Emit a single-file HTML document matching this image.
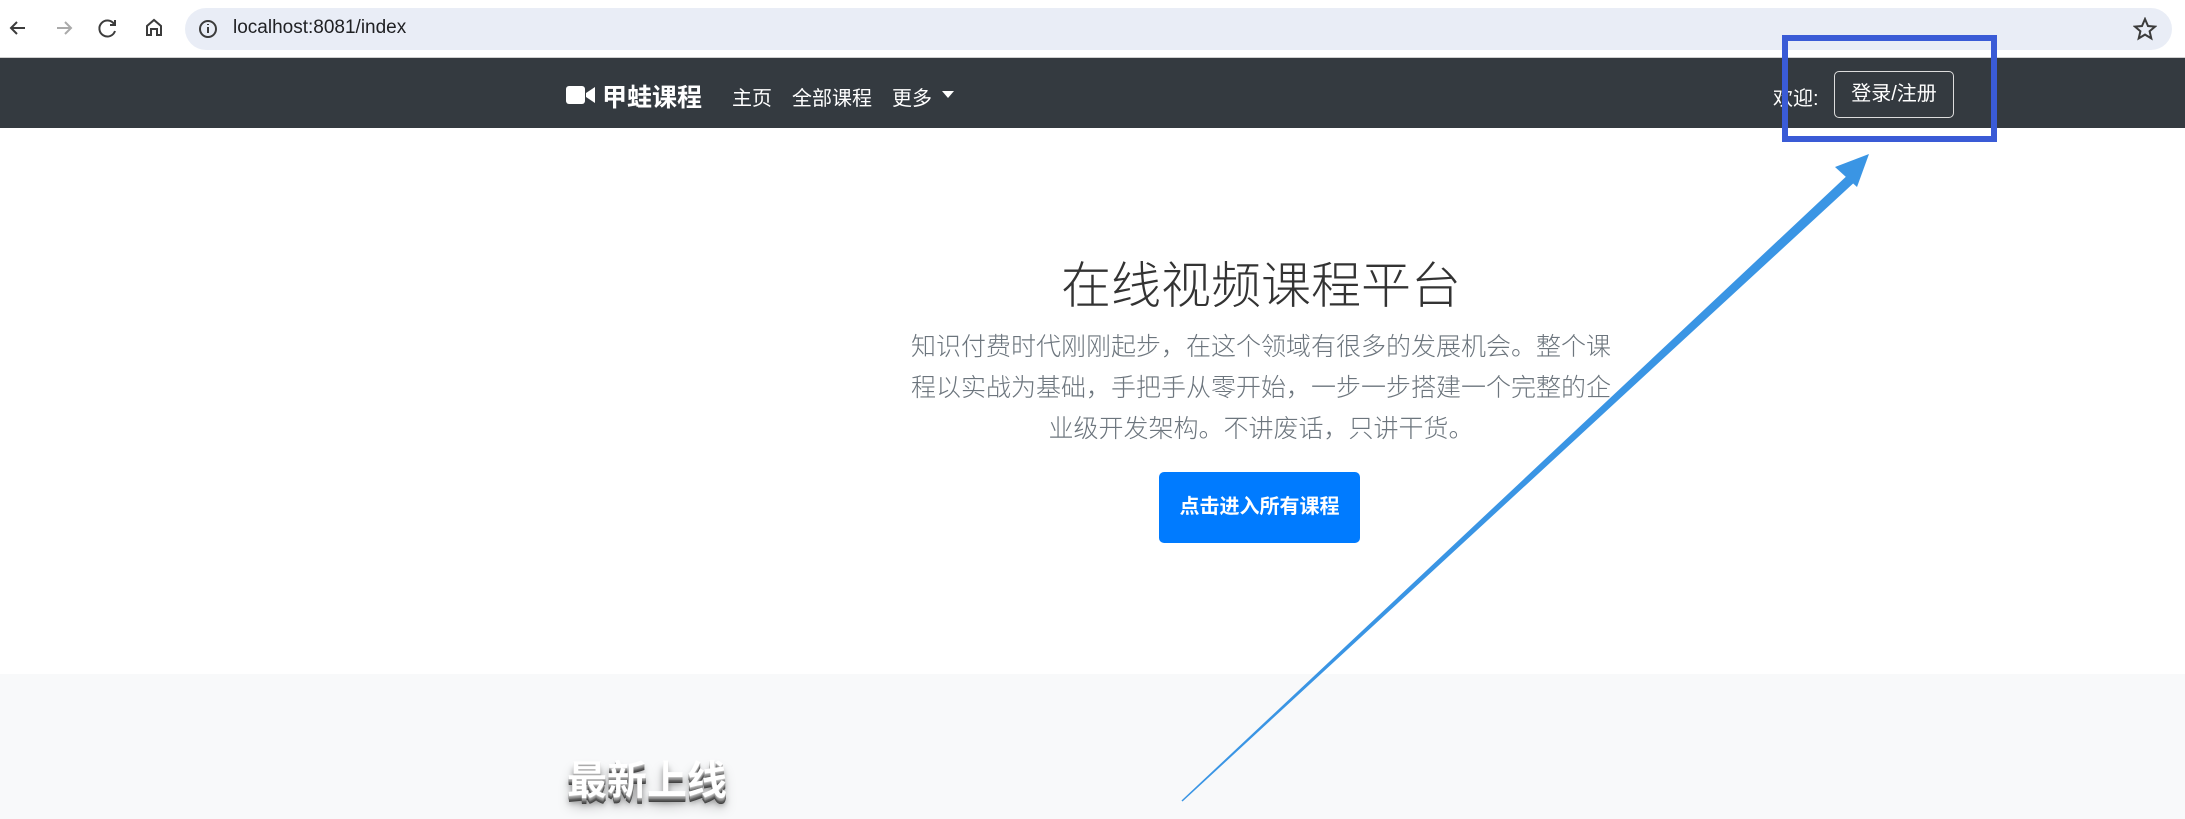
<!DOCTYPE html>
<html><head><meta charset="utf-8"><style>
*{margin:0;padding:0;box-sizing:border-box}
body{width:2185px;height:819px;overflow:hidden;background:#fff;font-family:"Liberation Sans","Noto Sans CJK SC",sans-serif;position:relative}
.abs{position:absolute}
.tb{top:0;left:0;width:2185px;height:58px;background:#fff;border-bottom:1px solid #d0d0d0}
.url{left:185px;top:8px;width:1987px;height:42px;background:#e9edf6;border-radius:21px}
.nav{top:58px;left:0;width:2185px;height:70px;background:#343a40;color:#fff}
.gray{top:674px;left:0;width:2185px;height:145px;background:#f8f9fa}
.p{left:861px;width:800px;text-align:center;font-size:25px;color:#6c757d;font-weight:300;white-space:nowrap}
</style></head><body>
<div class="abs tb"></div>
<div class="abs url"></div>
<svg class="abs" style="left:0;top:0" width="300" height="58">
<g stroke="#3c3c3c" stroke-width="2" fill="none">
<path d="M25 28h-14M17 22l-6 6 6 6"/>
<path d="M57 28h14M65 22l6 6-6 6" stroke="#aaa"/>
<path d="M114 24a8 8 0 1 0 1 7M115 20v5h-5"/>
<path d="M147 35v-9l7-6 7 6v9h-4v-6h-6v6z"/>
<circle cx="208" cy="29" r="8"/><path d="M208 27v6M208 24v1"/>
</g></svg>
<div class="abs" style="left:233px;top:17px;font-size:19px;color:#202124">localhost:8081/index</div>
<svg class="abs" style="left:2133px;top:17px" width="24" height="24"><path d="M12 2l3 7 7 .6-5.4 4.6 1.7 7.2L12 17.6 5.7 21.4l1.7-7.2L2 9.6 9 9z" fill="none" stroke="#3c3c3c" stroke-width="2"/></svg>
<div class="abs nav"></div>
<svg class="abs" style="left:566px;top:85px" width="30" height="20"><rect x="0" y="1" width="19" height="18" rx="3" fill="#fff"/><path d="M20 8l9-6v16l-9-6z" fill="#fff"/></svg>
<div class="abs" style="left:602px;top:78px;font-size:25px;color:#fff;font-weight:bold">甲蛙课程</div>
<div class="abs" style="left:732px;top:82px;font-size:20px;color:#fff">主页</div>
<div class="abs" style="left:792px;top:82px;font-size:20px;color:#fff">全部课程</div>
<div class="abs" style="left:892px;top:82px;font-size:20px;color:#fff">更多</div>
<div class="abs" style="left:942px;top:91px;width:0;height:0;border-left:6px solid transparent;border-right:6px solid transparent;border-top:7px solid #fff"></div>
<div class="abs" style="left:1773px;top:82px;font-size:20px;color:#fff">欢迎:</div>
<div class="abs" style="left:1834px;top:71px;width:120px;height:47px;border:1px solid #ddd;border-radius:5px;color:#fff;font-size:20px;text-align:center;line-height:45px">登录/注册</div>
<div class="abs" style="left:1011px;width:500px;top:246px;text-align:center;font-size:50px;color:#333;font-weight:300;white-space:nowrap">在线视频课程平台</div>
<div class="abs p" style="top:327px">知识付费时代刚刚起步，在这个领域有很多的发展机会。整个课</div>
<div class="abs p" style="top:368px">程以实战为基础，手把手从零开始，一步一步搭建一个完整的企</div>
<div class="abs p" style="top:409px">业级开发架构。不讲废话，只讲干货。</div>
<div class="abs" style="left:1159px;top:472px;width:201px;height:71px;background:#007bff;border-radius:5px;color:#fff;font-size:20px;font-weight:bold;text-align:center;line-height:71px">点击进入所有课程</div>
<div class="abs gray"></div>
<div class="abs" style="left:567px;top:748px;font-size:40px;font-weight:bold;color:#fff;text-shadow:0 1px 0 #bbb,0 2px 0 #999,0 3px 0 #888,0 4px 0 #666,0 5px 0 #555,0 6px 0 #444,0 7px 6px rgba(0,0,0,.35),0 10px 12px rgba(0,0,0,.25)">最新上线</div>
<div class="abs" style="left:1782px;top:35px;width:215px;height:107px;border:6px solid #3a5bd6"></div>
<svg class="abs" style="left:0;top:0" width="2185" height="819">
<path d="M1182 801L1852 172L1858 178Z" fill="#3a95e4" stroke="#3a95e4" stroke-width="1.5"/>
<path d="M1869 154L1835 167L1857 187Z" fill="#3a95e4"/>
</svg>
</body></html>
